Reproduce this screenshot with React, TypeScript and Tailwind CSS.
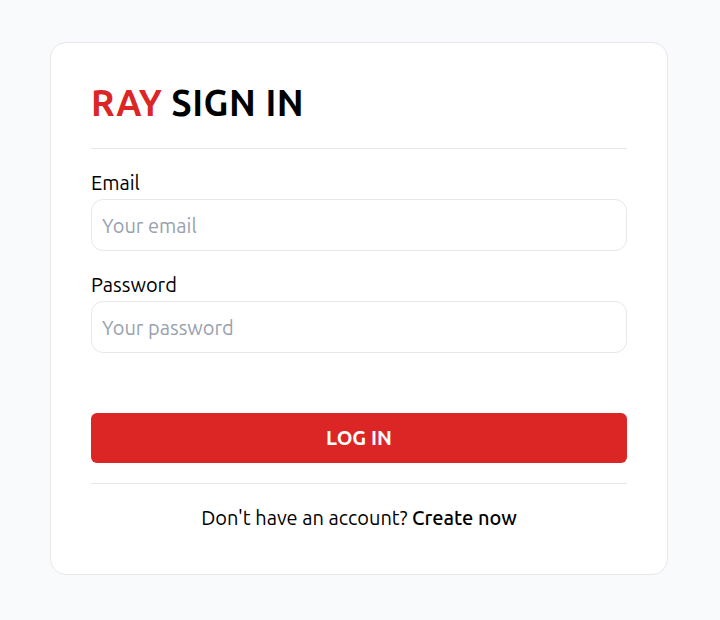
import React from 'react';

const App: React.FC = () => {
  const [email, setEmail] = React.useState('');
  const [password, setPassword] = React.useState('');

  return (
    <div
      className="min-h-screen bg-gray-50 pt-[42px] px-[50px]"
      style={{ fontFamily: 'Ubuntu, "Open Sans", "Noto Sans", sans-serif' }}
    >
      <div className="w-[618px] bg-white border border-gray-200 rounded-2xl px-10 pt-10 pb-[42px]">
        <h1 className="text-4xl font-semibold tracking-[0.5px] text-black pb-[25px] border-b border-gray-200">
          <span className="text-[#dc2626]">RAY</span> SIGN IN
        </h1>

        <form className="mt-5 flex flex-col" onSubmit={e => e.preventDefault()}>
          <label className="flex flex-col text-xl text-black">
            <span className="leading-7 mb-0.5">Email</span>
            <input
              type="email"
              value={email}
              onChange={e => setEmail(e.target.value)}
              placeholder="Your email"
              className="h-[52px] px-[10px] text-xl rounded-xl border border-gray-200 outline-none placeholder:text-gray-400"
            />
          </label>

          <label className="flex flex-col text-xl text-black mt-5">
            <span className="leading-7 mb-0.5">Password</span>
            <input
              type="password"
              value={password}
              onChange={e => setPassword(e.target.value)}
              placeholder="Your password"
              className="h-[52px] px-[10px] text-xl rounded-xl border border-gray-200 outline-none placeholder:text-gray-400"
            />
          </label>

          <button
            type="submit"
            className="mt-[60px] h-[50px] bg-[#dc2626] text-white text-xl font-semibold rounded-md"
          >
            LOG IN
          </button>
        </form>

        <div className="mt-5 pt-5 border-t border-gray-200 text-center text-xl leading-7 text-black">
          Don't have an account? <a href="#" className="font-medium">Create now</a>
        </div>
      </div>
    </div>
  );
};

export default App;
